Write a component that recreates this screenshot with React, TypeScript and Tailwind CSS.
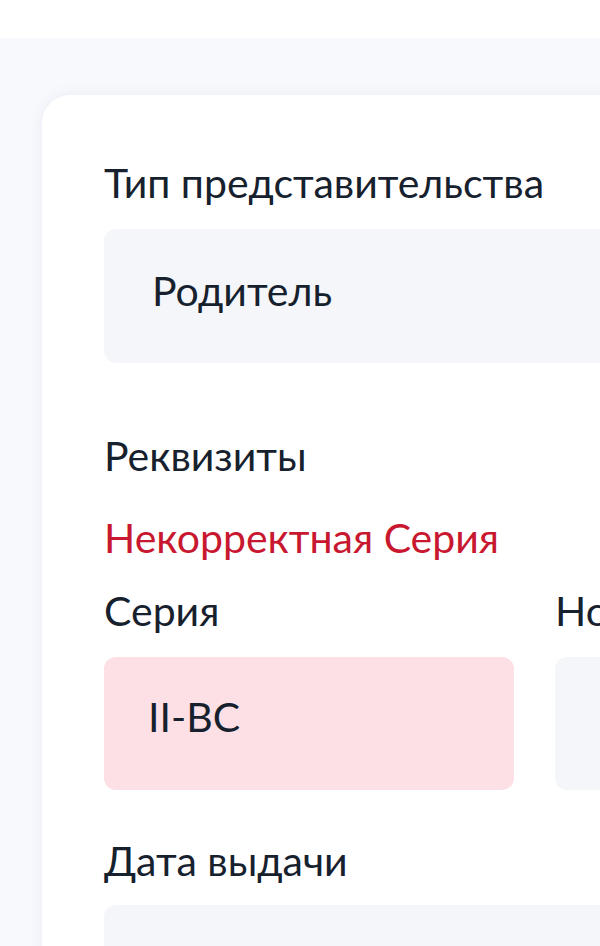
import React from "react";

export default function App() {
  return (
    <div
      className="w-[600px] h-[946px] overflow-hidden bg-[#f8f9fd] text-[#17212e]"
      style={{ fontFamily: "Lato, 'Noto Sans', sans-serif" }}
    >
      <div className="h-[38px] bg-white" />
      <div className="ml-[42px] mt-[57px] w-[720px] rounded-tl-[28px] bg-white shadow-[0_0_14px_rgba(120,140,190,0.12)] pl-[62px] pt-[63px] pb-[40px] flex flex-col">
        <div className="text-[41px] leading-[50px] whitespace-nowrap">Тип представительства</div>
        <div className="mt-[21px] h-[134px] shrink-0 rounded-[12px] bg-[#f4f6fa] pl-[48px] pt-[37px] text-[41px] leading-[50px]">
          Родитель
        </div>
        <div className="mt-[68px] text-[41px] leading-[50px]">Реквизиты</div>
        <div className="mt-[32px] text-[41px] leading-[50px] text-[#c8182f] whitespace-nowrap">Некорректная Серия</div>
        <div className="mt-[23px] flex gap-[41px] text-[41px] leading-[50px]">
          <div className="w-[410px] shrink-0">Серия</div>
          <div className="shrink-0 whitespace-nowrap">Номер</div>
        </div>
        <div className="mt-[21px] flex gap-[41px]">
          <div className="w-[410px] h-[133px] shrink-0 rounded-[12px] bg-[#fde0e5] pl-[44px] pt-[35px] text-[41px] leading-[50px]">
            II-BC
          </div>
          <div className="w-[300px] h-[133px] shrink-0 rounded-[12px] bg-[#f4f6fa] pl-[42px] pt-[35px] text-[41px] leading-[50px] whitespace-nowrap">
            123456
          </div>
        </div>
        <div className="mt-[46px] text-[41px] leading-[50px]">Дата выдачи</div>
        <div className="mt-[19px] h-[134px] shrink-0 rounded-[12px] bg-[#f4f6fa]" />
      </div>
    </div>
  );
}
